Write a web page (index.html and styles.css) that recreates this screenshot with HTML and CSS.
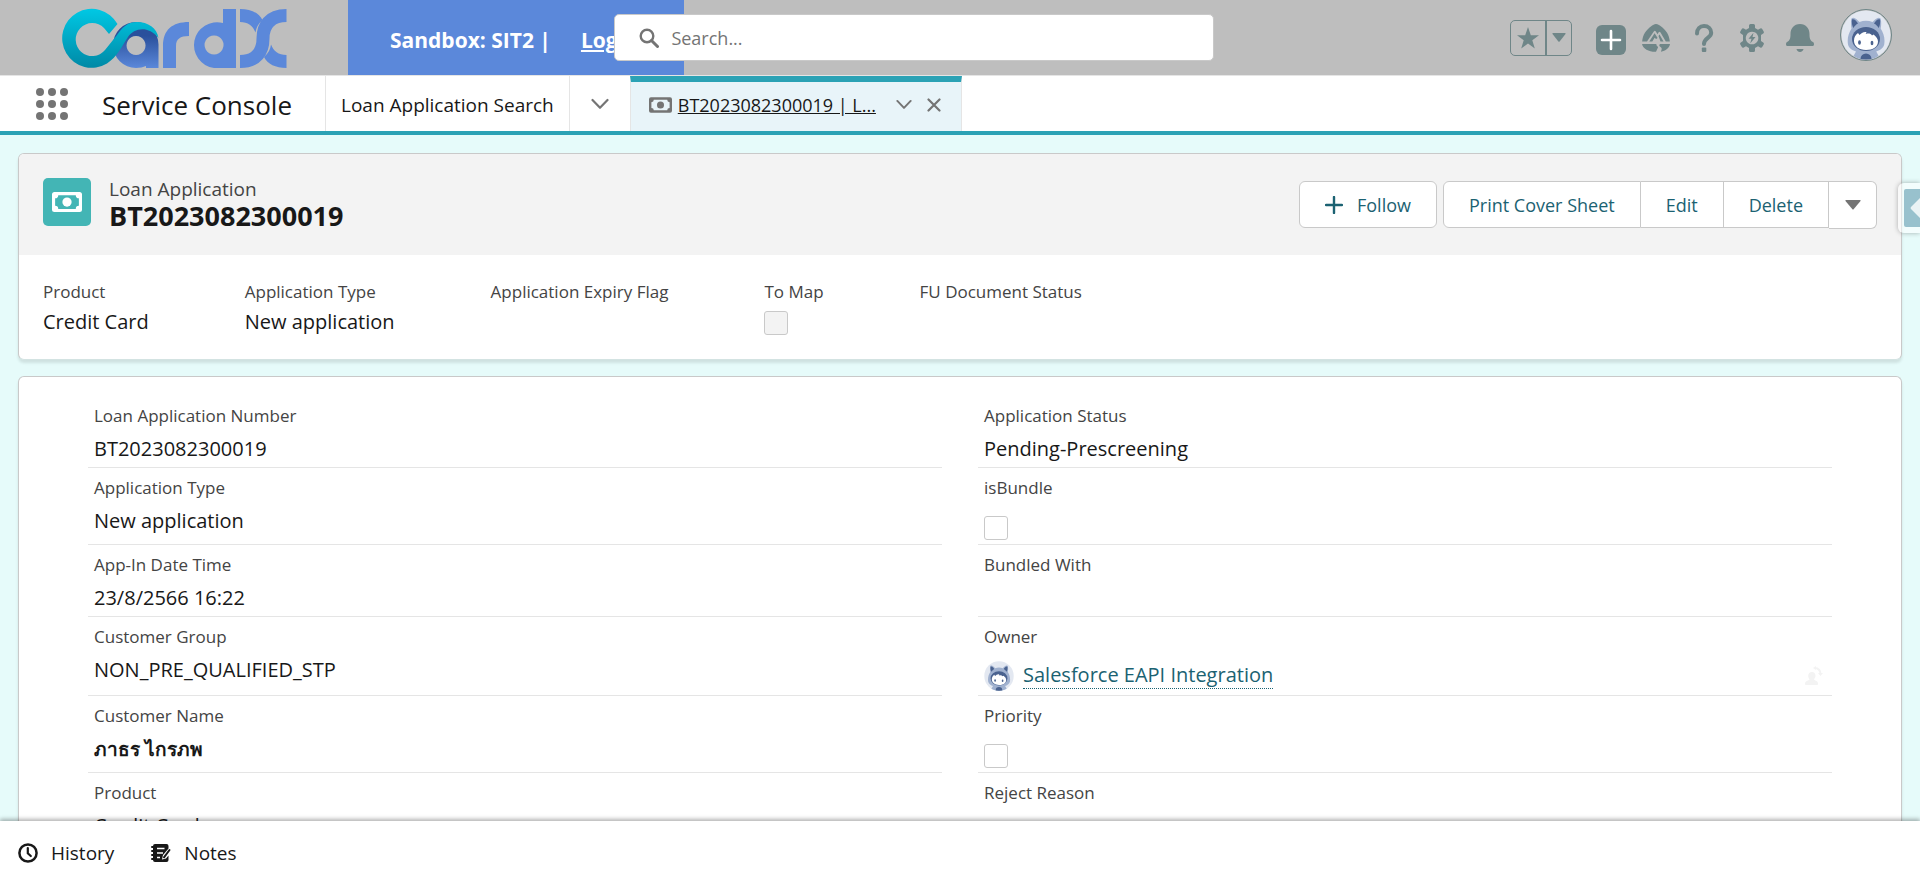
FILE: index.html
```html
<!DOCTYPE html>
<html lang="en">
<head>
<meta charset="utf-8">
<title>BT2023082300019 | Loan Application</title>
<link rel="stylesheet" href="styles.css">
</head>
<body>
<svg class="defs" width="0" height="0" aria-hidden="true">
  <defs>
    <symbol id="cash" viewBox="0 0 24 16">
      <path fill="currentColor" fill-rule="evenodd" d="M2 0h20a2 2 0 0 1 2 2v12a2 2 0 0 1-2 2H2a2 2 0 0 1-2-2V2a2 2 0 0 1 2-2zM5 2.500a2.500 2.500 0 0 1-2.500 2.500v6a2.500 2.500 0 0 1 2.500 2.500h14a2.500 2.500 0 0 1 2.500-2.500v-6a2.500 2.500 0 0 1-2.500-2.500z"/>
      <circle cx="12" cy="8" r="3.700" fill="currentColor"/>
    </symbol>
    <symbol id="chevron" viewBox="0 0 18 12">
      <path d="M1.500 2 9 9.800 16.500 2" fill="none" stroke="currentColor" stroke-width="2.200" stroke-linecap="round" stroke-linejoin="round"/>
    </symbol>
    <symbol id="astro" viewBox="0 0 50 50">
      <clipPath id="round"><circle cx="25" cy="25" r="24.500"/></clipPath>
      <g clip-path="url(#round)">
        <rect width="50" height="50" fill="#e3e8f1"/>
        <path d="M10.500 8.500c2-2.500 6 1 8 3.500 4-1.800 9-1.800 13 0 2-2.500 6-6 8-3.500 1 2 .8 7 .2 10 3 5 4.500 10 3.500 16-1 4-5 6-8 7l5 9H10l5-9c-3-1-7-3-8-7-1-6 .5-11 3.500-16-.6-3-.8-8 0-10z" fill="#a0b1cf"/>
        <path d="M11 9.500c2-1 4.500 1.500 6 4-2 1-3.500 2.500-4.500 4.500-1.500-2-2-6-1.500-8.500zM39 9.500c-2-1-4.500 1.500-6 4 2 1 3.500 2.500 4.500 4.500 1.500-2 2-6 1.500-8.500z" fill="#4a628f"/>
        <ellipse cx="25" cy="29" rx="14" ry="12" fill="#4a628f"/>
        <path d="M13 31c0-4 1.500-6 4-8l1.500 2c1.500-2 4-3.500 7-3l-.8 2c3-.8 5-.5 6.300 1.500l1.500-1c2.500 2 4.500 4 4.500 7 0 5-5 8.500-12 8.500s-12-4-12-9z" fill="#fff"/>
        <ellipse cx="18.500" cy="32.500" rx="1.400" ry="2.200" fill="#4a628f"/>
        <ellipse cx="31" cy="33" rx="1.400" ry="2.200" fill="#4a628f"/>
        <circle cx="25" cy="49" r="5.500" fill="#4a628f"/>
      </g>
    </symbol>
  </defs>
</svg>

<header class="topbar">
  <a class="logo" href="#" aria-label="CardX home">
    <svg viewBox="0 0 226 61" width="226" height="61" aria-hidden="true">
      <defs>
        <linearGradient id="teal" x1="0" y1="0" x2="0" y2="1"><stop offset="0" stop-color="#00c8e4"/><stop offset="1" stop-color="#0089a6"/></linearGradient>
        <linearGradient id="navy" x1="0" y1="0" x2="0" y2="1"><stop offset="0.300" stop-color="#2a509c"/><stop offset="1" stop-color="#5b88da"/></linearGradient>
      </defs>
      <path fill="url(#navy)" fill-rule="evenodd" d="M75 14a22.500 22.500 0 0 1 22.500 22.500V60H85v-2q-4 2-10 2a23 23 0 0 1 0-46zM75 28a9.500 9.500 0 1 0 .1 0z"/>
      <path fill="url(#teal)" d="M56.500 16A29.500 29.500 0 1 0 46 55.500C56 49 61 38 67 29c6-9 20-12 30.500 1C96 20 87 14 76 14c-10 0-15 6-20 13L44 42A16.500 16.500 0 1 1 43 20l5 6z"/>
      <g fill="#5b88da">
        <path d="M102 60V38c0-16 9-24 26-24v14c-9 0-13 3-13 10v22z"/>
        <path fill-rule="evenodd" d="M162 15V1h13v59h-22a23 23 0 1 1 9-45zM153 27.500a9.500 9.500 0 1 0 .1 0z"/>
        <path d="M179 1C190 1 198 5 201.500 12 197 16 195 20 194.500 24.500 192 18 187 14 179 14zM225.500 60C214.500 60 206.500 56 203 49 207.500 45 209.500 41 210 36.500 212.500 43 217.500 47 225.500 47z"/>
      </g>
      <path d="M225.500 7.500C208 7.500 202 18 202 30.500S196 53.500 179 53.500" fill="none" stroke-width="13" stroke="#5b88da"/>
    </svg>
  </a>
  <div class="sandbox"><span>Sandbox: SIT2 |</span><a href="#">Log out</a></div>
  <label class="search">
    <svg width="20" height="20" viewBox="0 0 20 20" aria-hidden="true"><circle cx="8" cy="8" r="6.300" fill="none" stroke="#747474" stroke-width="2.400"/><path d="m12.500 12.500 6 6" stroke="#747474" stroke-width="3" stroke-linecap="round"/></svg>
    <input type="search" placeholder="Search..." aria-label="Search">
  </label>
  <div class="tools">
    <div class="favorites">
      <button type="button" aria-label="Add to favorites"><svg width="22" height="22" viewBox="0 0 22 22"><path fill="currentColor" d="m11 0 2.800 8.200H22l-6.700 5 2.500 8.300L11 16.400l-6.800 5.100 2.500-8.300L0 8.200h8.200z"/></svg></button>
      <button type="button" aria-label="Favorites list"><svg width="14" height="9" viewBox="0 0 14 9"><path fill="currentColor" d="M1 0h12q1 0 .5 1L7.600 8.500q-.6.600-1.200 0L.5 1Q0 0 1 0z"/></svg></button>
    </div>
    <button type="button" class="add" aria-label="Global actions"><svg width="30" height="30" viewBox="0 0 30 30"><rect width="30" height="30" rx="6" fill="currentColor"/><path d="M15 6v18M6 15h18" stroke="#fff" stroke-width="2.600" stroke-linecap="round"/></svg></button>
    <button type="button" aria-label="Guidance center"><svg width="28" height="28" viewBox="0 0 28 28"><path fill="currentColor" d="M14 0c2 0 3 1 4.500 2C24 6 27.500 11 27.800 17.500h-4l-5.300-9a1.200 1.200 0 0 0-2 0l-1 1.700-1.700-2.700a1.200 1.200 0 0 0-2 0L5 17.500H.2C.5 11 4 6 9.500 2 11 1 12 0 14 0zM7.300 17.500l5.300-8.300 3 4.800-1.500 1-1.500-1.200-2.300 3.700zM16.500 12l1-1.600 4 7.100h-3zM0 20h14.500c-1 2 3 2.500 1 4.500l-1.500 3.300C7 28 1 25 0 20zM18 20h10c-.5 4-4.500 7-9 7.700.5-2 1.500-3.500-.5-4.700-1.500-1-1.500-2-.5-3z"/></svg></button>
    <button type="button" aria-label="Help"><svg width="28" height="28" viewBox="0 0 28 28"><path d="M7 9.500C7 5 9.800 2 14 2s7.200 2.800 7.200 6.800C21.200 14 14 14 14 20" fill="none" stroke="currentColor" stroke-width="4" stroke-linecap="round"/><rect x="11.800" y="23.500" width="4.500" height="4.500" rx="1" fill="currentColor"/></svg></button>
    <button type="button" aria-label="Setup"><svg width="28" height="28" viewBox="0 0 28 28"><path fill="currentColor" fill-rule="evenodd" d="M12.500 0h3q1.500 0 1.500 1.500V4l3 1.700 2.200-1.200q1.300-.7 2 .5l1.500 2.600q.7 1.300-.5 2L23 10.900v6.200l2.200 1.300q1.200.7.500 2L24.200 23q-.7 1.200-2 .5L20 22.300 17 24v2.500q0 1.500-1.500 1.500h-3q-1.500 0-1.500-1.500V24l-3-1.700-2.200 1.200q-1.300.7-2-.5l-1.500-2.600q-.7-1.300.5-2L5 17.100v-6.200L2.800 9.600q-1.200-.7-.5-2L3.800 5q.7-1.200 2-.5L8 5.700 11 4V1.500Q11 0 12.500 0zM14 7.700a6.300 6.300 0 1 0 .1 0z"/><path fill="currentColor" d="m15.500 8.800-5 6h3l-1.300 4.600 5.300-6.300h-3z"/></svg></button>
    <button type="button" aria-label="Notifications"><svg width="28" height="28" viewBox="0 0 28 28"><path fill="currentColor" d="M14 0c6 0 9.500 4.500 9.500 10 0 4 .5 6.500 3.500 8 1.500 1 1.300 4-.5 4h-25c-1.800 0-2-3-.5-4 3-1.500 3.500-4 3.500-8C4.500 4.500 8 0 14 0zM10.500 25h7c0 1.500-1.800 3-3.500 3s-3.500-1.500-3.500-3z"/></svg></button>
    <button type="button" class="profile" aria-label="View profile"><svg width="50" height="50"><use href="#astro"/></svg></button>
  </div>
</header>

<nav class="tabs" aria-label="Workspace">
  <button type="button" class="launcher" aria-label="App launcher"><svg width="32" height="32" viewBox="0 0 32 32" fill="currentColor"><circle cx="4" cy="4" r="4"/><circle cx="16" cy="4" r="4"/><circle cx="28" cy="4" r="4"/><circle cx="4" cy="16" r="4"/><circle cx="16" cy="16" r="4"/><circle cx="28" cy="16" r="4"/><circle cx="4" cy="28" r="4"/><circle cx="16" cy="28" r="4"/><circle cx="28" cy="28" r="4"/></svg></button>
  <h1 class="app-name">Service Console</h1>
  <a class="nav-item" href="#">Loan Application Search</a>
  <button type="button" class="nav-menu" aria-label="Show navigation menu"><svg width="18" height="12"><use href="#chevron"/></svg></button>
  <div class="tab-active">
    <svg width="23" height="16" aria-hidden="true"><use href="#cash"/></svg>
    <a class="tab-title" href="#" title="BT2023082300019 | Loan Application">BT2023082300019 | L...</a>
    <button type="button" aria-label="Tab actions"><svg width="16" height="11"><use href="#chevron"/></svg></button>
    <button type="button" aria-label="Close tab"><svg width="14" height="14" viewBox="0 0 14 14"><path d="m1.500 1.500 11 11m0-11-11 11" stroke="currentColor" stroke-width="2.200" stroke-linecap="round"/></svg></button>
  </div>
</nav>

<main class="workspace">
  <section class="card">
    <div class="record-head">
      <span class="record-icon"><svg width="32" height="20" aria-hidden="true"><use href="#cash"/></svg></span>
      <div class="record-name">
        <p>Loan Application</p>
        <h2>BT2023082300019</h2>
      </div>
      <div class="actions">
        <button type="button" class="follow"><svg width="18" height="18" viewBox="0 0 18 18" aria-hidden="true"><path d="M9 1v16M1 9h16" stroke="currentColor" stroke-width="2.400" stroke-linecap="round"/></svg>Follow</button>
        <div class="group">
          <button type="button">Print Cover Sheet</button>
          <button type="button">Edit</button>
          <button type="button">Delete</button>
          <button type="button" class="more" aria-label="Show more actions"><svg width="16" height="10" viewBox="0 0 16 10"><path fill="currentColor" d="M1 0h14q1 0 .5 1L8.600 9.300q-.6.600-1.200 0L.5 1Q0 0 1 0z"/></svg></button>
        </div>
      </div>
    </div>
    <dl class="highlights">
      <div><dt>Product</dt><dd>Credit Card</dd></div>
      <div><dt>Application Type</dt><dd>New application</dd></div>
      <div><dt>Application Expiry Flag</dt><dd></dd></div>
      <div><dt><label for="to-map">To Map</label></dt><dd><input id="to-map" class="check" type="checkbox" disabled></dd></div>
      <div><dt>FU Document Status</dt><dd></dd></div>
    </dl>
  </section>

  <section class="card">
    <dl class="details">
      <div class="field"><dt>Loan Application Number</dt><dd>BT2023082300019</dd></div>
      <div class="field"><dt>Application Status</dt><dd>Pending-Prescreening</dd></div>
      <div class="field"><dt>Application Type</dt><dd>New application</dd></div>
      <div class="field"><dt><label for="is-bundle">isBundle</label></dt><dd class="boxed"><input id="is-bundle" class="check" type="checkbox"></dd></div>
      <div class="field"><dt>App-In Date Time</dt><dd>23/8/2566 16:22</dd></div>
      <div class="field"><dt>Bundled With</dt><dd></dd></div>
      <div class="field"><dt>Customer Group</dt><dd>NON_PRE_QUALIFIED_STP</dd></div>
      <div class="field"><dt>Owner</dt><dd class="owner"><svg width="30" height="30" aria-hidden="true"><use href="#astro"/></svg><a href="#">Salesforce EAPI Integration</a><button type="button" aria-label="Change owner"><svg width="18" height="20" viewBox="0 0 18 20"><path fill="currentColor" d="M7 6c2.200 0 3.500 1.600 3.500 3.800 0 1.500-.8 2.700-1.500 3.500 0 1.500 4 1.200 4 4.500 0 .8-.4 1.200-1 1.200H1c-.6 0-1-.4-1-1.200 0-3.300 4.500-3 4.500-4.500-.8-.8-1.300-2-1.300-3.500C3.200 7.600 4.800 6 7 6z"/><path d="M9.500 2c4 0 6 2 6 6.500" fill="none" stroke="currentColor" stroke-width="2"/><path fill="currentColor" d="m8 2 3-2v4zM15.500 10l-2.500-3h5z"/></svg></button></dd></div>
      <div class="field"><dt>Customer Name</dt><dd class="strong" lang="th">ภาธร ไกรภพ</dd></div>
      <div class="field"><dt><label for="priority">Priority</label></dt><dd class="boxed"><input id="priority" class="check" type="checkbox"></dd></div>
      <div class="field"><dt>Product</dt><dd>Credit Card</dd></div>
      <div class="field"><dt>Reject Reason</dt><dd></dd></div>
    </dl>
  </section>
  <button type="button" class="side-toggle" aria-label="Open side panel"><span><svg width="10" height="20" viewBox="0 0 10 20"><path fill="#fff" fill-opacity="0.800" d="M10 0v20L1 11q-1-1 0-2z"/></svg></span></button>
</main>

<footer class="utility">
  <button type="button"><svg width="20" height="20" viewBox="0 0 20 20" aria-hidden="true"><circle cx="10" cy="10" r="8.600" fill="none" stroke="currentColor" stroke-width="2.500"/><path d="M9.800 5v5.300l3 2.700" fill="none" stroke="currentColor" stroke-width="2.200" stroke-linecap="round"/></svg>History</button>
  <button type="button"><svg width="20" height="18" viewBox="0 0 20 18" aria-hidden="true"><path fill="currentColor" d="M4 0h11.500Q17.500 0 17.500 2v2.500L12 11l-1 4.500L15 14.500l2.500-3V16q0 2-2 2H4q-2 0-2-2H1q-1 0-1-1t1-1h1v-2H1q-1 0-1-1t1-1h1V8H1q-1 0-1-1t1-1h1V4H1Q0 4 0 3t1-1h1q0-2 2-2z"/><path d="M6 4.500h7.500M6 9h6M6 13.500h3" stroke="#fff" stroke-width="1.500"/><path d="m18.500 6-5.500 7.300" stroke="currentColor" stroke-width="2" stroke-linecap="round"/></svg>Notes</button>
</footer>
</body>
</html>
```
FILE: styles.css
```css
* { box-sizing: border-box; }

body {
  margin: 0;
  height: 100vh;
  display: flex;
  flex-direction: column;
  overflow: hidden;
  background: #e6fbfa;
  color: #181818;
  font: 20px/30px "Open Sans", "Noto Sans", sans-serif;
}

h1, h2, p, dl, dd { margin: 0; }
svg { display: block; flex: none; }
.defs { position: absolute; }

button {
  display: flex;
  align-items: center;
  justify-content: center;
  padding: 0;
  border: 0;
  background: none;
  color: inherit;
  font: inherit;
  cursor: pointer;
}

/* Top bar */
.topbar {
  position: relative;
  flex: none;
  display: flex;
  height: 76px;
  background: #bebebe;
  border-bottom: 1px solid #e5e5e5;
}
.logo { width: 348px; padding: 8px 0 0 61px; }
.sandbox {
  display: flex;
  align-items: center;
  gap: 30px;
  width: 336px;
  padding: 4px 0 0 42px;
  background: #5b88da;
  color: #fff;
  font-size: 21px;
  font-weight: 700;
  white-space: nowrap;
}
.sandbox a { color: inherit; }
.search {
  position: absolute;
  top: 14px;
  left: 32%;
  display: flex;
  align-items: center;
  gap: 12px;
  width: 600px;
  height: 47px;
  padding: 0 24px;
  background: #fff;
  border: 1px solid #c9c9c9;
  border-radius: 5px;
}
.search input {
  flex: 1;
  border: 0;
  outline: 0;
  padding: 0;
  background: none;
  font: inherit;
  font-size: 18px;
}
.search input::placeholder { color: #747474; }
.tools {
  display: flex;
  align-items: center;
  gap: 20px;
  margin-left: auto;
  padding-right: 28px;
  color: #6f8688;
}
.favorites {
  display: flex;
  width: 62px;
  height: 36px;
  border: 1px solid;
  border-radius: 5px;
}
.favorites button { flex: 1; }
.favorites button:first-child { flex: none; width: 36px; border-right: 2px solid; }
.add { margin: 4px -4px 0 4px; }
.profile { margin: 0 0 6px 6px; border: 1px solid; border-radius: 50%; }

/* Tab bar */
.tabs {
  flex: none;
  display: flex;
  height: 59px;
  background: #fff;
  border-bottom: 4px solid #2ba2b5;
}
.launcher { width: 102px; padding-left: 2px; color: #747474; }
.app-name {
  width: 223px;
  font-size: 26px;
  font-weight: 400;
  line-height: 58px;
  white-space: nowrap;
}
.nav-item {
  padding: 0 15px;
  border: solid #e5e5e5;
  border-width: 0 1px;
  color: inherit;
  font-size: 19px;
  line-height: 58px;
  text-decoration: none;
}
.nav-menu { width: 60px; color: #747474; }
.tab-active {
  display: flex;
  align-items: center;
  width: 332px;
  padding: 0 20px 4px 18px;
  background: #e8f4f9;
  border: solid #e5e5e5;
  border-width: 0 1px;
  border-top: 6px solid #2ba2b5;
  color: #747474;
}
.tab-title {
  flex: 1;
  margin: 0 16px 0 6px;
  color: #181818;
  font-size: 18px;
  white-space: nowrap;
}
.tab-active button + button { margin-left: 15px; }

/* Workspace */
.workspace {
  position: relative;
  flex: 1;
  min-height: 0;
  overflow: hidden;
  padding: 18px;
  display: flex;
  flex-direction: column;
  gap: 16px;
}
.card {
  flex: none;
  overflow: hidden;
  background: #fff;
  border: 1px solid #c9c9c9;
  border-bottom-color: #d3e3e2;
  border-radius: 6px;
  box-shadow: 0 3px 3px rgba(0, 0, 0, 0.1);
}
.record-head {
  display: flex;
  align-items: flex-start;
  height: 101px;
  padding: 24px;
  background: #f3f3f3;
}
.record-icon {
  display: grid;
  place-items: center;
  width: 48px;
  height: 48px;
  border-radius: 5px;
  background: #43b5b5;
  color: #fff;
}
.record-name { margin-left: 18px; }
.record-name p { color: #444; font-size: 19px; line-height: 22px; }
.record-name h2 { font-size: 27px; line-height: 31px; }
.actions { display: flex; gap: 6px; margin: 3px 0 0 auto; }
.actions button {
  height: 47px;
  padding: 0 25px;
  border: 1px solid #c9c9c9;
  background: #fff;
  color: #1b6272;
  font-size: 18px;
}
.actions .follow { gap: 14px; border-radius: 6px; }
.group { display: flex; }
.group button + button { border-left: 0; }
.group button:first-child { border-radius: 6px 0 0 6px; }
.group .more { width: 48px; height: 48px; padding: 0; border-radius: 0 6px 6px 0; color: #747474; }

dt { color: #444; font-size: 17px; line-height: 26px; }
.highlights { display: flex; gap: 96px; padding: 24px 24px 18px; }
.highlights dd { height: 30px; margin-top: 2px; }
.check {
  appearance: none;
  display: block;
  width: 24px;
  height: 24px;
  margin: 0;
  background: #fff;
  border: 1px solid #c9c9c9;
  border-radius: 3px;
}
.check:disabled { margin-top: 6px; background: #f3f3f3; }

.details {
  display: grid;
  grid-template-columns: 1fr 1fr;
  column-gap: 36px;
  padding: 19px 69px;
}
.field { padding: 7px 6px 3px; border-bottom: 1px solid #e5e5e5; }
.field dd { min-height: 30px; margin-top: 5px; }
.field .boxed { padding-top: 10px; padding-bottom: 1px; }
.field .strong { font-weight: 700; font-size: 19px; }
.field .owner { display: flex; align-items: center; gap: 9px; min-height: 37px; padding-top: 4px; }
.owner a {
  border-bottom: 1px dotted #1b6272;
  color: #1b6272;
  line-height: 26px;
  text-decoration: none;
}
.owner button { margin: 0 3px 0 auto; color: #f3f3f3; }

.side-toggle {
  position: absolute;
  top: 48px;
  right: 0;
  width: 22px;
  height: 50px;
  padding-left: 6px;
  background: rgba(255, 255, 255, 0.5);
  border-radius: 6px 0 0 6px;
  box-shadow: 0 0 5px rgba(0, 0, 0, 0.3);
}
.side-toggle span {
  display: flex;
  align-items: center;
  justify-content: flex-end;
  width: 16px;
  height: 38px;
  border-radius: 2px 0 0 2px;
  background: #98c1cd;
}

/* Utility bar */
.utility {
  position: relative;
  flex: none;
  display: flex;
  gap: 37px;
  height: 59px;
  padding: 4px 18px 0;
  background: #fff;
  box-shadow: 0 -2px 4px rgba(0, 0, 0, 0.3);
}
.utility button { gap: 13px; font-size: 19px; }
```
